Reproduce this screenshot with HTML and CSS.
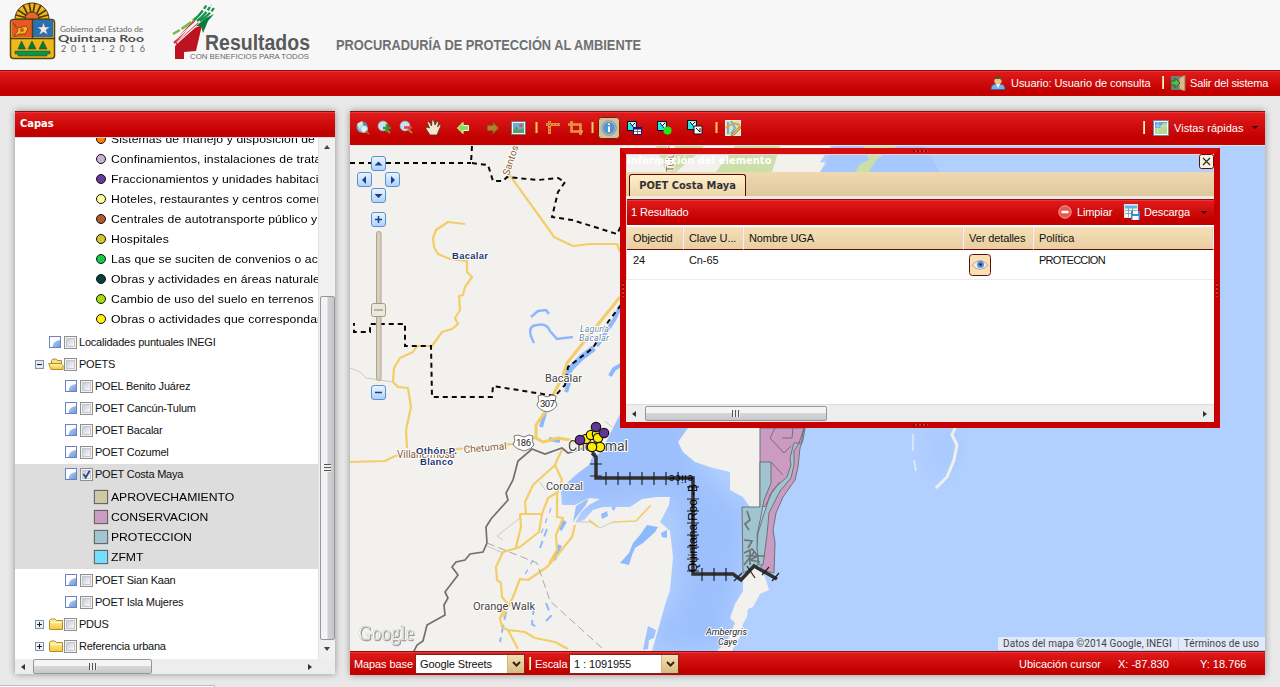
FILE: index.html
```html
<!DOCTYPE html>
<html lang="es">
<head>
<meta charset="utf-8">
<title>Procuraduría de Protección al Ambiente</title>
<link rel="stylesheet" href="styles.css">
</head>
<body>
<svg class="defs" width="0" height="0">
  <linearGradient id="gBlue" x1="0" y1="0" x2="1" y2="1"><stop offset="0" stop-color="#b9d0f2"/><stop offset="1" stop-color="#6f9bdf"/></linearGradient>
  <linearGradient id="gBox" x1="0" y1="0" x2="1" y2="1"><stop offset="0" stop-color="#c4c8cf"/><stop offset="1" stop-color="#fdfdfd"/></linearGradient>
  <linearGradient id="gFold" x1="0" y1="0" x2="0" y2="1"><stop offset="0" stop-color="#fff3a8"/><stop offset="1" stop-color="#f5c93e"/></linearGradient>
  <symbol id="layer" viewBox="0 0 12 12"><rect x=".5" y=".5" width="11" height="11" fill="#fff" stroke="#6f7fc4"/><path d="M3.500 11Q4 4.500 11 4V11Z" fill="url(#gBlue)"/></symbol>
  <symbol id="box" viewBox="0 0 13 13"><rect x=".5" y=".5" width="12" height="12" fill="#f4f4f4" stroke="#8e8f8f"/><rect x="2.500" y="2.500" width="8" height="8" fill="url(#gBox)" stroke="#c3c7cc"/></symbol>
  <symbol id="boxon" viewBox="0 0 13 13"><use href="#box"/><path d="M3.500 6L5.700 9.500L9.700 2.800" fill="none" stroke="#33478b" stroke-width="1.800"/></symbol>
  <symbol id="folder" viewBox="0 0 16 13"><path d="M1.500 11V2.500L3 1H7L8.500 2.500H14.500V11.500H2Z" fill="url(#gFold)" stroke="#b58b2a"/><path d="M2.500 4.500H14" stroke="#fff9d0"/></symbol>
  <symbol id="open" viewBox="0 0 16 13"><path d="M3.500 11V2.500L5 1H8L9.500 2.500H13.500V6" fill="#f8df80" stroke="#b58b2a"/><path d="M.700 5.500H13L15 7.500V11.500H3Z" fill="url(#gFold)" stroke="#b58b2a"/></symbol>
  <symbol id="plus" viewBox="0 0 9 9"><rect x=".5" y=".5" width="8" height="8" fill="#eef1f5" stroke="#7b93ab"/><path d="M2 4.500H7M4.500 2V7" stroke="#222"/></symbol>
  <symbol id="minus" viewBox="0 0 9 9"><rect x=".5" y=".5" width="8" height="8" fill="#e2e8f2" stroke="#7b93ab"/><path d="M2 4.500H7" stroke="#222"/></symbol>
  <symbol id="sel" viewBox="0 0 16 16"><rect x="0" y="0" width="10" height="10" fill="#111"/><rect x="1" y="1" width="8" height="8" fill="#20e7ee"/><path d="M2 1.500H8.500V8Z" fill="#fff"/><path d="M3 2L8 8M8 2L5 5" stroke="#111"/></symbol>
</svg>

<header class="brand">
  <svg width="660" height="70" viewBox="0 0 660 70">
    <g transform="translate(32 18)" stroke="#4b3b12" stroke-width="1">
      <path d="M-17 1A17 16 0 0 1 17 1Z" fill="#f1b516"/>
      <path d="M-16 -3L-5 0M-14 -8L-5 -2M-9 -13L-4 -3M-3 -15L-1 -5M3 -15L1 -5M9 -13L4 -3M14 -8L5 -2M16 -3L5 0" stroke-width="1.700"/>
      <path d="M-7 1A7 7 0 0 1 7 1Z" fill="#e5662a"/>
    </g>
    <rect x="10.500" y="19.500" width="44" height="39" rx="3" fill="#f0b81b" stroke="#58470f" stroke-width="1.500"/>
    <rect x="12" y="20" width="20" height="17" fill="#e35b23"/><rect x="33" y="20" width="20" height="17" fill="#2572b9"/>
    <path d="M10 38.500H55M32.500 19V38" stroke="#4d3e10" stroke-width="1.500"/>
    <path d="M13 23L18 28L26 26L28 29L25 34H19L14 37L18 30Z" fill="#f3b525" stroke="#863015" stroke-width=".8"/><circle cx="22" cy="30" r="2" fill="#d15622"/>
    <path d="M43.500 22L45 27L50 27L46 30L48 35L43.500 32L39 35L41 30L37 27L42 27Z" fill="#eee" stroke="#555" stroke-width=".5"/>
    <path d="M21.500 41L25.500 49H18ZM32 41L36 49H28ZM43 41L47 49H39Z" fill="#08783f" stroke="#254f17" stroke-width=".6"/>
    <path d="M15 51H50V54H47V56H18V54H15Z" fill="#109149" stroke="#30561e" stroke-width=".6"/>
    <g class="logo-font" fill="#666">
      <text x="60" y="32" font-size="7" textLength="83" lengthAdjust="spacingAndGlyphs">Gobierno del Estado de</text>
      <text x="58" y="42" font-size="10" font-weight="700" fill="#4d4d50" textLength="86" lengthAdjust="spacingAndGlyphs">Quintana Roo</text>
      <text x="61" y="52" font-size="9" textLength="84">2011-2016</text>
    </g>
    <path d="M175 59V46L180 41L190 30L202 25L196 51L184 52V59Z" fill="#bb1420"/>
    <path d="M174 43L195 20M176 44L199 23" stroke="#cf2630" stroke-width="2"/>
    <path d="M173 34Q184 28 196 18" fill="none" stroke="#70bd49" stroke-width="2.500" stroke-dasharray="8 2 12 2"/>
    <path d="M175 40L200 18M177 43L203 20" stroke="#f7f7f7" stroke-width="1.100"/>
    <path d="M194 20Q202 13 207 4M197 21Q207 13 211 5M200 21Q209 15 214 8" fill="none" stroke="#16934a" stroke-width="2.300" stroke-dasharray="13 2 4 2"/>
    <path d="M196 26L206 18L214 14L208 21L203 33L201 26Z" fill="#087c3d"/>
    <g class="narrow" font-weight="700">
      <text x="205" y="50" font-size="22" fill="#59595b" textLength="105" lengthAdjust="spacingAndGlyphs">Resultados</text>
      <text x="336" y="50" font-size="15.500" fill="#6f6f71" textLength="305" lengthAdjust="spacingAndGlyphs">PROCURADURÍA DE PROTECCIÓN AL AMBIENTE</text>
    </g>
    <text class="sans" x="190" y="59" font-size="7.500" fill="#68686a" textLength="119" lengthAdjust="spacingAndGlyphs">CON BENEFICIOS PARA TODOS</text>
  </svg>
</header>

<nav class="userbar red">
  <svg width="16" height="16" viewBox="0 0 16 16"><path d="M1 14.500Q1 9 6 9H10Q15 9 15 14.500Z" fill="#7db0e2" stroke="#366aa2"/><path d="M6 9L8 13L10 9" fill="#fff"/><circle cx="8" cy="5.500" r="3.800" fill="#edc08c"/><path d="M4 6Q3 1 8 1Q13 1 12 6L10 4L5 4Z" fill="#774519"/></svg>
  <span class="user-name">Usuario: Usuario de consulta</span>
  <i class="sep"></i>
  <svg class="exit" width="17" height="16" viewBox="0 0 17 16"><rect x="1" y="1" width="10" height="14" fill="#6f7d79"/><path d="M9 3L15 0V16L9 14Z" fill="#d8ba8a" stroke="#97744c"/><path d="M1 6H5V3L10 8L5 13V10H1Z" fill="#5cb553" stroke="#216f2b"/></svg>
  <span class="exit-text">Salir del sistema</span>
</nav>

<main class="work">
<aside class="layers shadow">
  <h2 class="red">Capas</h2>
  <div class="layers-mid">
    <div class="tree">
      <div class="legend dots">
        <p><i class="c1"></i><span>Sistemas de manejo y disposición de residuos</span></p>
        <p><i class="c2"></i><span>Confinamientos, instalaciones de tratamiento</span></p>
        <p><i class="c3"></i><span>Fraccionamientos y unidades habitacionales</span></p>
        <p><i class="c4"></i><span>Hoteles, restaurantes y centros comerciales</span></p>
        <p><i class="c5"></i><span>Centrales de autotransporte público y privado</span></p>
        <p><i class="c6"></i><span>Hospitales</span></p>
        <p><i class="c7"></i><span>Las que se suciten de convenios o acuerdos</span></p>
        <p><i class="c8"></i><span>Obras y actividades en áreas naturales</span></p>
        <p><i class="c9"></i><span>Cambio de uso del suelo en terrenos</span></p>
        <p><i class="c10"></i><span>Obras o actividades que correspondan</span></p>
      </div>
      <div class="node n1"><svg class="ly"><use href="#layer"/></svg><svg class="cb"><use href="#box"/></svg><span>Localidades puntuales INEGI</span></div>
      <div class="node n0"><svg class="tg"><use href="#minus"/></svg><svg class="fd"><use href="#open"/></svg><svg class="cb"><use href="#box"/></svg><span>POETS</span></div>
      <div class="node n2"><svg class="ly"><use href="#layer"/></svg><svg class="cb"><use href="#box"/></svg><span>POEL Benito Juárez</span></div>
      <div class="node n2"><svg class="ly"><use href="#layer"/></svg><svg class="cb"><use href="#box"/></svg><span>POET Cancún-Tulum</span></div>
      <div class="node n2"><svg class="ly"><use href="#layer"/></svg><svg class="cb"><use href="#box"/></svg><span>POET Bacalar</span></div>
      <div class="node n2"><svg class="ly"><use href="#layer"/></svg><svg class="cb"><use href="#box"/></svg><span>POET Cozumel</span></div>
      <div class="selected">
        <div class="node n2"><svg class="ly"><use href="#layer"/></svg><svg class="cb"><use href="#boxon"/></svg><span>POET Costa Maya</span></div>
        <div class="legend squares">
          <p><i class="s1"></i><span>APROVECHAMIENTO</span></p>
          <p><i class="s2"></i><span>CONSERVACION</span></p>
          <p><i class="s3"></i><span>PROTECCION</span></p>
          <p><i class="s4"></i><span>ZFMT</span></p>
        </div>
      </div>
      <div class="node n2"><svg class="ly"><use href="#layer"/></svg><svg class="cb"><use href="#box"/></svg><span>POET Sian Kaan</span></div>
      <div class="node n2"><svg class="ly"><use href="#layer"/></svg><svg class="cb"><use href="#box"/></svg><span>POET Isla Mujeres</span></div>
      <div class="node n0"><svg class="tg"><use href="#plus"/></svg><svg class="fd"><use href="#folder"/></svg><svg class="cb"><use href="#box"/></svg><span>PDUS</span></div>
      <div class="node n0"><svg class="tg"><use href="#plus"/></svg><svg class="fd"><use href="#folder"/></svg><svg class="cb"><use href="#box"/></svg><span>Referencia urbana</span></div>
    </div>
    <div class="vscroll"><b class="up"></b><div class="vthumb"><i></i></div><b class="down"></b></div>
  </div>
  <div class="hscroll"><b class="left"></b><div class="hthumb"><i></i></div><b class="right"></b></div>
</aside>

<section class="viewer shadow">
  <div class="tools red">
    <svg width="400" height="34" viewBox="350 111 400 34">
      <g><circle cx="362" cy="127" r="5.500" fill="#6ab0e0"/><path d="M357 124L362 121L364 126L360 130Z" fill="#d3eecb"/><path d="M363 122L367 125L364 128Z" fill="#2b7ec0"/><circle cx="364" cy="129" r="3.500" fill="#e3f0f8" stroke="#a8b9c8"/><path d="M366 131L369 134" stroke="#a67b3b" stroke-width="1.500"/></g>
      <g><circle cx="383" cy="126" r="4.800" fill="#c6e3f7" stroke="#9ebdd2"/><path d="M386 129L390 133" stroke="#b5813b" stroke-width="2"/><path d="M383 128H391M387 124V132" stroke="#2c9a37" stroke-width="2.600"/></g>
      <g><circle cx="405" cy="126" r="4.800" fill="#c6e3f7" stroke="#9ebdd2"/><path d="M408 129L412 133" stroke="#b5813b" stroke-width="2"/><path d="M404 127.500H412" stroke="#e5423e" stroke-width="2.600"/></g>
      <path d="M430 135L426 129Q425 126 429.500 128L427 122Q429 120 431.500 126L432 120Q434 119 435 125L437 121Q439.500 121 437.500 127L440 124Q442 124 439 130L437 135Z" fill="#f5e6cd" stroke="#49351c" stroke-width=".8"/>
      <path d="M457.500 128L463 122.500V125.500H468.500V130.500H463V133.500Z" fill="#83e24e" stroke="#e8ffd9"/>
      <path d="M498.500 128L493 122.500V125.500H487.500V130.500H493V133.500Z" fill="#ae8130" stroke="#8a5d1e"/>
      <rect x="511.500" y="121.500" width="14" height="13" fill="#eef3f5" stroke="#777"/><rect x="513" y="123" width="11" height="8" fill="#67ade0"/><path d="M513 131L516 126L519 130L524 128V133H513Z" fill="#5c9c69"/><circle cx="521" cy="125.500" r="1.800" fill="#e35a2c"/>
      <path d="M536.500 122V133M592.500 122V133M716.500 122V133" stroke="#f2c96e" stroke-width="2"/>
      <path d="M546 124.500H560M549.500 121V134" stroke="#e6923c" stroke-width="3"/><path d="M547 124.500H560M549.500 122V134" stroke="#a7461a" stroke-dasharray="1 2"/>
      <path d="M568 124.500H580.500V135M571.500 121V131.500H583" fill="none" stroke="#e59643" stroke-width="2.600"/>
      <rect x="598.500" y="117.500" width="21" height="21" rx="3" fill="#d8c096" stroke="#5d2a10"/><circle cx="609" cy="128" r="6.500" fill="#5793cf" stroke="#d5e7f5"/><circle cx="609" cy="128" r="7.100" fill="none" stroke="#416fa9" stroke-width=".7"/><path d="M609 126.500V132M609 123.500V125" stroke="#fff" stroke-width="2"/>
      <use href="#sel" x="627" y="121" width="16" height="16"/><rect x="633.500" y="127.500" width="8" height="7" fill="#fff" stroke="#151582"/><path d="M634 128.500H641" stroke="#151582" stroke-width="2"/><path d="M634 131.500H641M637.500 129V134" stroke="#555" stroke-width=".8"/>
      <use href="#sel" x="657" y="121" width="16" height="16"/><circle cx="667.500" cy="130.500" r="4" fill="#18ef12"/>
      <use href="#sel" x="687" y="120" width="16" height="16"/><path d="M694 126H702V134H694Z" fill="#fff" stroke="#111"/><path d="M696 128L700 132V128" fill="none" stroke="#111"/>
      <rect x="725.500" y="120.500" width="15" height="15" fill="#cfe5c5" stroke="#e9eee0"/><path d="M728 122V134M731 121L735 128L731 134" stroke="#79aeda" stroke-width="2" fill="none"/><path d="M726 128L733 123L740 125" stroke="#dfa53e" stroke-width="2" fill="none"/><path d="M740 126L732 134L731 136L734 135L741 128Z" fill="#eab252" stroke="#a66524" stroke-width=".7"/>
    </svg>
    <div class="quick"><i class="sep"></i><svg width="16" height="16" viewBox="0 0 16 16"><rect x=".5" y=".5" width="15" height="15" fill="#f7faf8" stroke="#789"/><rect x="2" y="2" width="12" height="12" fill="#65a7df"/><path d="M2 12V8L7 8L10 3H14V14H2Z" fill="#b8d995"/><path d="M5 2V14M2 6H14" stroke="#d8eff4" stroke-width=".6"/></svg><span>Vistas rápidas</span><b class="caret"></b></div>
  </div>

  <div class="map">
  <svg class="mapart" width="915" height="505" viewBox="350 146 915 505">
    <defs><filter id="soft" x="-60%" y="-60%" width="220%" height="220%"><feGaussianBlur stdDeviation="12"/></filter>
    <linearGradient id="gBtn" x1="0" y1="0" x2="0" y2="1"><stop offset="0" stop-color="#eef5ff"/><stop offset="1" stop-color="#aed0fa"/></linearGradient></defs>
    <rect x="350" y="146" width="915" height="505" fill="#b2d0ff"/>
    <path d="M590 400L690 400L700 470L750 510L745 560L725 651H640L680 590L675 500L590 510L550 500Z" fill="#9dc0fd" filter="url(#soft)"/>
    <ellipse cx="942" cy="450" rx="16" ry="30" fill="#a8c8fe" filter="url(#soft)"/>
    <g fill="#f2f1ed">
      <path d="M350 146H835L820 172V412H621L607 440L600 453L592 457L589 465L578 473L568 482L561 491L562 505L575 505L589 498L586 505L579 516L575 523L584 520L593 510L603 507L630 507L642 499L657 497L670 497L669 505L660 522L670 531L673 557L670 590L665 605L660 623L652 651H350Z"/>
      <path d="M688 428L678 442L683 452L695 462L713 468L730 472V490L743 497L750 507L762 507V420H690Z"/>
      <path d="M753 567L743 580V591L735 604L730 618L735 623L728 639L717 651H732L740 637L743 624L747 617L748 609L753 607L760 594L769 590L765 577L758 567Z"/>
    </g>
    <path d="M575 523L579 514L589 505L600 499L588 498L575 506L567 506L570 523Z" fill="#f2f1ed"/><path d="M589 498L576 506L573 522L578 515L586 505Z" fill="#9dc0fd"/>
    <path d="M656 146H704L696 155L676 172H666ZM735 146H780L772 172H716Z" fill="#cbdfa9"/>
    <path d="M831 146H925L940 172H820L828 163L820 162Z" fill="#a2c5ff" opacity=".8"/><path d="M863 146H897L885 154L876 160L869 172H855L860 164L869 160Z" fill="#cbdfa9"/>
    <path d="M647 525L658 527L655 532L643 543L635 548L632 555L629 565L620 563L629 553L633 543L640 535Z" fill="#8db9ff"/><path d="M648 626L656 630L654 638L649 640L648 649L643 650L645 640Z" fill="#9ec3ff"/>
    <path d="M601 514L607 511L608 516L602 519ZM611 508L616 506L614 511Z" fill="#91bbff"/>
    <path d="M661 533L667 530L667 538L662 537Z" fill="#91bbff"/>
    <g fill="none" stroke="#8db8ff">
      <path d="M534 343Q525 326 537 325Q547 323 550 331L557 339L573 337" stroke-width="2.500"/><path d="M531 317L538 311L546 310L549 314" stroke-width="2.500"/>
      <path d="M621 305L614 320L606 332L597 346" stroke-width="4"/><path d="M594 348L582 357L570 369L565 383" stroke-width="6"/><path d="M621 365L614 369L610 376" stroke-width="4"/><path d="M570 380L566 392M545 413L541 427M565 521L560 530M560 545L554 560" stroke-width="4"/><path d="M534 607L532 624L539 629M546 603L551 616L545 622M506 612L500 642M547 529L540 548" stroke-width="2" stroke-dasharray="8 5"/><path d="M551 508L541 534M533 560L522 580" stroke-width="1.200" stroke-dasharray="5 6"/>
      <path d="M549 439L560 441" stroke-width="4"/>
    </g>
    <path d="M350 368L360 372L366 378L393 382M540 482L545 490M520 518L497 536L503 540M487 546L503 553M605 421L612 427M578 522L590 522L600 528L613 522" fill="none" stroke="#cccac3"/>
    <g fill="none" stroke="#f3cd67" stroke-width="2.200" stroke-linejoin="round">
      <path d="M465 224L448 222L436 230L433 238L434 247L438 254L450 259L467 261V272L472 277L465 287L463 295L459 296L460 310L455 318L458 324L452 329L442 332L432 346L417 346L413 352L400 358L394 368L393 382L398 387L408 388L411 407L406 430L407 448"/>
      <path d="M508 173L545 224L554 237L573 246L590 244L617 244L620 252"/><path d="M620 297L567 363L562 378L553 395L545 412L536 425V438L543 442L558 438L570 440L585 449" stroke-width="3"/>
      <path d="M350 462L385 461L395 456L415 453L512 444L535 438"/>
      <path d="M562 450L557 460L555 465L533 485L525 502L526 514M555 465L562 480L558 492L548 498L542 514H520L521 527L516 547M542 514L539 532L520 547L503 552L496 567L497 580L501 583L502 597L507 603L500 618L502 627L508 630L525 632L535 638L555 642L568 649M508 630L518 649M503 617L513 597L520 579L528 580L547 567L555 558L572 537L575 525M557 492V517L563 518L556 535L557 550L549 563"/>
      <path d="M589 520L598 527M613 522L636 521L651 505" stroke-width="1.700"/>
    </g>
    <path d="M412 655L417 645L423 641L427 625L445 615L444 605L448 598L445 592L458 575L452 567L456 562L465 560L470 554L483 552L487 543L486 527L491 519L508 500L506 493L513 480L518 461L532 449L545 454L562 448L568 453L585 448L596 454" fill="none" stroke="#707070" stroke-width="1.700"/>
    <path d="M487 543L537 563L550 601L602 648" fill="none" stroke="#aaa" stroke-dasharray="8 4"/>
    <path d="M472 146L471 163L488 165L493 181L503 181L507 177L538 180L558 178L565 182L558 192L552 217L572 220L617 234L621 226M350 163H471M621 305L608 322L593 348L568 367L565 385L555 396L493 386L492 397H432L431 346H405V324H370V332H354V323" fill="none" stroke="#080808" stroke-width="2" stroke-dasharray="5 4"/>

    <g stroke="#6c7379" stroke-width="1">
      <path d="M760 428H805L803 440L800 448L798 467L795 480L783 497L776 513L773 530L775 543L774 573L761 570L763 530L767 506L760 507Z" fill="#cc9bc1"/>
      <path d="M760 462H771V483L764 500L760 521L757 535L758 565L743 573L742 507H760Z" fill="#a1c5d0"/>
      <path d="M804 428L801 443H794L790 458L791 465L787 477L777 486L770 495L763 517L758 533L757 548L759 565H763L767 535L769 513L780 491L791 478L794 465V451L799 443Z" fill="#a1c5d0"/>
      <path d="M775 428L770 438L784 453M771 462L783 475M793 428L792 438H782M784 453L791 446M780 482L773 490L766 505" fill="none"/>
      <path d="M747 511L750 520L745 524L749 530M744 540L752 541L748 548M744 553L752 549L758 556L750 560L760 562M746 556L765 556M744 565L755 551M750 565V550" fill="none" stroke-width="1.700"/>
    </g>

    <path d="M592 453L596 457V478H693V574H733L741 580L754 566L777 579" fill="none" stroke="#303030" stroke-width="3.500"/>
    <path d="M590 464H602M590 476H602M606 472V485M618 472V485M630 472V485M642 472V485M654 472V485M666 472V485M678 472V485M687 487H699M687 499H699M687 511H699M687 523H699M687 535H699M687 547H699M687 559H699M687 571H699M702 568V581M714 568V581M726 568V581M734 581L742 573M747 566L755 578M762 575L769 567M772 581L779 573" stroke="#222" stroke-width="1.200"/>
    <text class="sans" font-size="12" textLength="88" lengthAdjust="spacingAndGlyphs" transform="translate(697 572) rotate(-90)">Quintana Roo -B</text><text class="sans" font-size="10" textLength="24" transform="translate(693 475) rotate(180)">elice</text>
    <path d="M955 428L952 435L957 445L954 460L947 477L936 488" fill="none" stroke="#f0f0ea" stroke-width="3"/><path d="M913 434L913 451M914 460L916 471" stroke="#e5edf1" stroke-width="1.500"/>

    <g class="halo roboto" fill="#424242">
      <text x="545" y="382" font-size="11.500" textLength="37" lengthAdjust="spacingAndGlyphs">Bacalar</text><text x="546" y="490" font-size="11.500" textLength="37" lengthAdjust="spacingAndGlyphs">Corozal</text><text x="473" y="610" font-size="11.500" textLength="62" lengthAdjust="spacingAndGlyphs">Orange Walk</text><text x="568" y="451" font-size="14" textLength="60" lengthAdjust="spacingAndGlyphs">Chetumal</text>
      <g font-style="italic" font-size="9" fill="#6c88ac"><text x="580" y="332" textLength="29">Laguna</text><text x="579" y="341" textLength="30">Bacalar</text></g>
      <g font-style="italic" font-size="9.500" fill="#222"><text x="706" y="635" textLength="41" lengthAdjust="spacingAndGlyphs">Ambergris</text><text x="718" y="645" textLength="19" lengthAdjust="spacingAndGlyphs">Caye</text></g>
      <g font-size="10" fill="#895d33"><text x="397" y="458" textLength="58" lengthAdjust="spacingAndGlyphs">Villahermosa</text><text x="464" y="453" textLength="43" lengthAdjust="spacingAndGlyphs" transform="rotate(-5 464 453)">Chetumal</text><text transform="translate(509 176) rotate(-72)" textLength="31">Santos</text><text transform="translate(674 172) rotate(-90)" textLength="28">Tulum</text></g>
    </g>
    <g class="halo sans" fill="#1b3273" font-weight="700" font-size="9.500"><text x="452" y="259" textLength="36">Bacalar</text><text x="416" y="454" textLength="41">Othón P.</text><text x="420" y="465" textLength="33">Blanco</text></g>
    <g fill="#fff" stroke="#777"><path d="M538 396L542 395L547 397L552 395L556 396Q554 401 557 405Q555 410 547 412Q539 410 537 405Q540 401 538 396Z"/><path d="M514 436L518 435L524 437L529 435L533 436Q531 441 534 445Q532 449 524 451Q516 449 513 445Q516 441 514 436Z"/></g>
    <g class="roboto" font-size="9.500" fill="#222"><text x="540" y="407" textLength="15">307</text><text x="516" y="446" textLength="15">186</text></g>
    <g stroke="#151515" stroke-width="1.200"><g fill="#ffed00"><circle cx="586" cy="439" r="4.700"/><circle cx="591" cy="435" r="4.700"/><circle cx="597" cy="434" r="4.700"/><circle cx="598" cy="438" r="4.700"/><circle cx="600" cy="447" r="4.700"/><circle cx="592" cy="447" r="4.700"/></g><g fill="#653399"><circle cx="596" cy="427" r="4.700"/><circle cx="604" cy="433" r="4.700"/><circle cx="580" cy="440" r="4.700"/></g></g>
    <text x="358" y="640" font-size="20" class="serif google" textLength="56" lengthAdjust="spacingAndGlyphs">Google</text>

    <rect x="376.500" y="231.500" width="4.500" height="149" rx="2" fill="#d7cfbe" stroke="#ada391"/>
    <g fill="url(#gBtn)" stroke="#5c91d1"><rect x="371.500" y="156.500" width="14" height="14" rx="2.500"/><rect x="357.500" y="172.500" width="14" height="14" rx="2.500"/><rect x="385.500" y="172.500" width="14" height="14" rx="2.500"/><rect x="371.500" y="188.500" width="14" height="14" rx="2.500"/><rect x="371.500" y="212.500" width="14" height="14" rx="2.500"/><rect x="371.500" y="385.500" width="14" height="14" rx="2.500"/></g>
    <path d="M374.500 165.500L378.500 161.500L382.500 165.500ZM374.500 194L378.500 198L382.500 194ZM366 176V184L362 180ZM391 176V184L395 180Z" fill="#15418e"/><path d="M375 219.500H382M378.500 216V223M375 392.500H382" stroke="#15418e" stroke-width="1.500"/>
    <rect x="371.500" y="303.500" width="14" height="13" rx="2" fill="#eee8dc" stroke="#a39986"/><path d="M374 310H383" stroke="#81796d"/>
  </svg>
  <div class="credits"><span>Datos del mapa ©2014 Google, INEGI</span><span>Términos de uso</span></div>

  <div class="window">
    <div class="win-title"><strong>Información del elemento</strong><svg class="close" width="15" height="15" viewBox="0 0 15 15"><rect x=".5" y=".5" width="14" height="14" rx="2" fill="#faf2e0" stroke="#5a1208"/><path d="M4 4L11 11M11 4L4 11" stroke="#2b2925" stroke-width="1.200"/></svg></div>
    <div class="tabs"><span class="tab">POET Costa Maya</span></div>
    <div class="result red"><span class="count">1 Resultado</span>
      <svg width="14" height="14" viewBox="0 0 14 14"><circle cx="7" cy="7" r="6.200" fill="#e55a50" stroke="#f0a098"/><path d="M3.500 7H10.500" stroke="#fff" stroke-width="2.500"/></svg><span class="clear">Limpiar</span>
      <svg class="dl" width="16" height="16" viewBox="0 0 16 16"><rect x=".5" y=".5" width="13" height="13" fill="#f0f8fc" stroke="#d5e3ee"/><path d="M1 3H13" stroke="#67aee8" stroke-width="3"/><path d="M1 6.500H13M1 9.500H13M4.500 4V13M8.500 4V13" stroke="#6ba889" stroke-width=".8"/><rect x="7" y="7" width="9" height="9" fill="#4587d1"/><path d="M9 7H14V10H9ZM8.500 12H14.500V16H8.500Z" fill="#fff"/></svg><span class="download">Descarga</span><b class="caret"></b>
    </div>
    <div class="grid head"><span>Objectid</span><span>Clave U...</span><span>Nombre UGA</span><span>Ver detalles</span><span>Política</span></div>
    <div class="grid data"><span>24</span><span>Cn-65</span><span></span><span class="eye-cell"><svg width="22" height="22" viewBox="0 0 22 22"><rect x=".5" y=".5" width="21" height="21" rx="3" fill="#fae0b4" stroke="#5e1309"/><path d="M3 11Q11 2 19 11Q11 20 3 11Z" fill="#e9edf0" stroke="#cfa27d"/><circle cx="11.500" cy="10.500" r="3.500" fill="#568ed9"/><circle cx="11.500" cy="10.500" r="1.200" fill="#122"/></svg></span><span class="policy">PROTECCION</span></div>
    <div class="empty"></div>
    <div class="hscroll winscroll"><b class="left"></b><div class="hthumb"><i></i></div><b class="right"></b></div>
    <i class="grip gt"></i><i class="grip gb"></i><i class="grip gl"></i><i class="grip gr"></i>
  </div>
  </div>

  <footer class="status red">
    <span class="lab1">Mapas base</span><div class="combo m1"><span>Google Streets</span><b><svg width="9" height="6"><path d="M1 1L4.500 4.500L8 1" fill="none" stroke="#3a2410" stroke-width="2"/></svg></b></div>
    <i class="sep"></i><span class="lab2">Escala</span><div class="combo m2"><span>1 : 1091955</span><b><svg width="9" height="6"><path d="M1 1L4.500 4.500L8 1" fill="none" stroke="#3a2410" stroke-width="2"/></svg></b></div>
    <span class="cursor">Ubicación cursor</span><span class="x">X: -87.830</span><span class="y">Y: 18.766</span>
  </footer>
</section>
</main>
<div class="browser-status"></div>
</body>
</html>
```
FILE: styles.css
```css
* { box-sizing: border-box; }
body { margin: 0; width: 1280px; height: 687px; overflow: hidden; background: #e9e9e9; font: 11px/14px "Liberation Sans", Arial, sans-serif; color: #111; }
p, h2 { margin: 0; }
i { font-style: normal; }
svg { display: block; flex: none; }
.defs { position: absolute; }
.sans { font-family: "Liberation Sans", sans-serif; }
.roboto { font-family: Roboto, sans-serif; }
.serif { font-family: "Liberation Serif", serif; }
.narrow { font-family: "Liberation Sans Narrow", "Liberation Sans", sans-serif; }
.logo-font { font-family: Lato, sans-serif; }

.red { background: linear-gradient(#e01c1c, #c30000 80%); border-top: 1px solid #8c0d0d; box-shadow: inset 0 1px #ee3434; color: #fff; }
.shadow { box-shadow: 0 0 7px rgba(0,0,0,.38); }
.brand { height: 70px; background: #f7f7f7; }
.userbar { height: 26px; display: flex; align-items: center; padding: 0 0 2px 990px; }
.user-name { margin-left: 5px; width: 151px; letter-spacing: -.06px; white-space: nowrap; }
.sep { width: 2px; height: 13px; background: #f1c869; border-right: 1px solid #fff1c7; flex: none; }
.exit { margin-left: 6px; }
.exit-text { margin-left: 3px; white-space: nowrap; letter-spacing: -.14px; }

.work { display: flex; gap: 15px; padding: 15px; height: 591px; align-items: flex-start; }
.layers { width: 320px; height: 563px; background: #fff; display: flex; flex-direction: column; }
.layers h2 { height: 26px; padding: 5px 5px; font: bold 11px/14px "DejaVu Sans Condensed", "DejaVu Sans", sans-serif; }
.layers-mid { height: 522px; display: flex; border-top: 1px solid #d8d8d8; }
.tree { width: 303px; overflow: hidden; }
.legend p { height: 20px; display: flex; align-items: center; white-space: nowrap; color: #000; }
.legend span { letter-spacing: .08px; transform: scaleX(1.11); transform-origin: left; }
.squares span { letter-spacing: -.05px; }
.dots { margin-top: -9px; margin-bottom: 2px; }
.dots p { padding-left: 81px; }
.dots i { width: 10px; height: 10px; border: 1px solid #111; border-radius: 50%; margin-right: 5px; flex: none; }
.c1 { background: #ff7f00; } .c2 { background: #c9b1d5; } .c3 { background: #693a9a; } .c4 { background: #ffff99; } .c5 { background: #b15928; }
.c6 { background: #d3c52b; } .c7 { background: #15c94a; } .c8 { background: #073f3f; } .c9 { background: #a3df00; } .c10 { background: #fff000; }
.squares { padding: 2px 0; }
.squares p { padding-left: 79px; }
.squares i { width: 14px; height: 14px; border: 1px solid #666; margin-right: 3px; box-shadow: 0 0 1px #777; }
.s1 { background: #cec8a3; } .s2 { background: #cb9bc3; } .s3 { background: #a1c6d0; } .s4 { background: #73dfff; }
.selected { background: linear-gradient(#fff 1px, #dddddd 1px); }
.node { height: 22px; display: flex; align-items: center; white-space: nowrap; }
.node span { margin-left: 2px; letter-spacing: -.22px; }
.n0 { padding-left: 20px; } .n1 { padding-left: 34px; } .n2 { padding-left: 50px; }
.ly { width: 12px; height: 12px; margin-right: 3px; }
.cb { width: 13px; height: 13px; }
.tg { width: 9px; height: 9px; margin-right: 4px; }
.fd { width: 16px; height: 13px; }

.vscroll { width: 17px; background: #f0f0f0; display: flex; flex-direction: column; align-items: center; border-left: 1px solid #e2e2e2; }
.up { margin-top: 7px; border: 3.500px solid transparent; border-top: 0; border-bottom: 4px solid #444; }
.down { margin-top: 7px; border: 3.500px solid transparent; border-bottom: 0; border-top: 4px solid #444; }
.vthumb { margin-top: 147px; width: 15px; height: 344px; border: 1px solid #979797; border-radius: 2px; background: linear-gradient(90deg, #f3f3f3 45%, #d0d0d4 55%, #c5c5ca); display: flex; align-items: center; justify-content: center; }
.vthumb i { width: 7px; height: 8px; background: repeating-linear-gradient(#555 0 1px, #eee 1px 3px); }
.hscroll { height: 15px; background: #ededed; display: flex; align-items: center; width: 100%; }
.left { margin-left: 6px; border: 3.500px solid transparent; border-left: 0; border-right: 4px solid #333; }
.right { margin-left: auto; margin-right: 23px; border: 3.500px solid transparent; border-right: 0; border-left: 4px solid #333; }
.hthumb { margin-left: 8px; width: 119px; height: 15px; border: 1px solid #979797; border-radius: 2px; background: linear-gradient(#f4f4f4 45%, #d7d7da 50%, #c8c8cc); display: flex; align-items: center; justify-content: center; }
.hthumb i { width: 8px; height: 7px; background: repeating-linear-gradient(90deg, #555 0 1px, #eee 1px 3px); }

.viewer { width: 915px; height: 564px; display: flex; flex-direction: column; }
.tools { height: 34px; display: flex; margin-bottom: 1px; justify-content: space-between; }
.tools > svg { margin-top: -1px; }
.quick { width: 122px; display: flex; align-items: center; white-space: nowrap; padding-bottom: 2px; }
.quick svg { margin: 0 5px 0 8px; }
.quick span { letter-spacing: .05px; }
.caret { border: 3px solid transparent; border-bottom: 0; border-top: 3px solid #310000; margin-left: 8px; }
.map { position: relative; height: 505px; overflow: hidden; }
.halo { paint-order: stroke; stroke: #fff; stroke-width: 2px; stroke-linejoin: round; }
.google { fill: #fff; stroke: #bbb; stroke-width: .4px; filter: drop-shadow(1px 1px .5px #999); }
.credits { position: absolute; right: 0; bottom: 1px; display: flex; gap: 1px; font: 10px/13px Roboto, sans-serif; letter-spacing: .08px; color: #444; white-space: nowrap; }
.credits span { background: #dfe9f8; padding: 0 6px 0 5px; height: 13px; }

.window { position: absolute; left: 270px; top: 2px; width: 600px; height: 280px; border: 6px solid #c80000; border-top-color: #d60d0d; display: flex; flex-direction: column; box-shadow: inset 0 0 0 1px #e6d5e1; }
.win-title { height: 18px; display: flex; justify-content: space-between; color: #fff; font: bold 11px/14px "DejaVu Sans Condensed", "DejaVu Sans", sans-serif; letter-spacing: .05px; padding-left: 1px; }
.tabs { height: 27px; background: linear-gradient(#eed9b1, #e0c89c); border-bottom: 3px solid #e9e9ec; padding: 2px 3px 0; }
.tab { display: block; width: 117px; height: 22px; border: 1px solid #5e0906; border-bottom: 0; border-radius: 3px 3px 0 0; background: linear-gradient(#fff0cb, #ecd5ab); font: bold 11px/21px "DejaVu Sans Condensed", "DejaVu Sans", sans-serif; color: #333; text-align: center; }
.result { height: 26px; display: flex; align-items: center; margin-left: 1px; padding-bottom: 1px; letter-spacing: -.12px; }
.count { margin-left: 4px; width: 427px; }
.clear { margin-left: 5px; width: 47px; }
.dl { margin-right: 4px; }
.download { width: 49px; }
.grid { display: grid; grid-template-columns: 57px 60px 220px 70px 1fr; margin-left: 1px; }
.grid span { padding-left: 6px; white-space: nowrap; letter-spacing: -.1px; }
.grid span + span { padding-left: 5px; }
.grid .policy { letter-spacing: -.75px; }
.head { height: 25px; padding-top: 2px; background: #fff; line-height: 22px; }
.head span { background: linear-gradient(#f6dfb7, #e8cfa2); border-bottom: 1px solid #680b08; border-right: 1px solid #f9eef0; box-shadow: inset -1px 0 #ead1c5; }
.data { height: 30px; background: #fff; border-bottom: 1px solid #f2e9ea; padding-top: 3px; }
.data .eye-cell { padding: 1px 0 0 5px; }
.empty { flex: 1; background: #fff; border-bottom: 1px solid #ddd; }
.winscroll { height: 17px; }
.winscroll .hthumb { width: 182px; margin-left: 9px; }
.winscroll .right { margin-right: 7px; }
.grip { position: absolute; background: repeating-linear-gradient(90deg, #880000 0 2px, #e82a22 2px 4px); }
.gt { left: 287px; top: -4px; width: 15px; height: 2px; }
.gb { left: 287px; bottom: -4px; width: 15px; height: 2px; }
.gl, .gr { background: repeating-linear-gradient(#880000 0 2px, #e82a22 2px 4px); width: 2px; height: 15px; top: 128px; }
.gl { left: -4px; } .gr { right: -4px; }

.status { height: 24px; display: flex; align-items: center; white-space: nowrap; }
.lab1 { margin-left: 4px; width: 61px; letter-spacing: -.1px; }
.combo { height: 20px; display: flex; background: #fff; border: 1px solid #7d2920; color: #111; line-height: 18px; }
.combo span { padding-left: 4px; flex: 1; letter-spacing: -.1px; }
.combo b { width: 17px; background: linear-gradient(#f4dfb6, #d9bb82); border-left: 1px solid #d5b67f; display: flex; align-items: center; justify-content: center; }
.m1 { width: 110px; margin-right: 4px; }
.lab2 { margin-left: 4px; width: 34px; letter-spacing: -.1px; }
.m2 { width: 110px; }
.cursor { margin-left: auto; width: 99px; }
.x { width: 82px; }
.y { width: 65px; }
.browser-status { position: absolute; left: 0; bottom: 0; width: 215px; height: 2px; background: #fff; border-top: 1px solid #bcbcbc; border-right: 1px solid #bcbcbc; }
```
